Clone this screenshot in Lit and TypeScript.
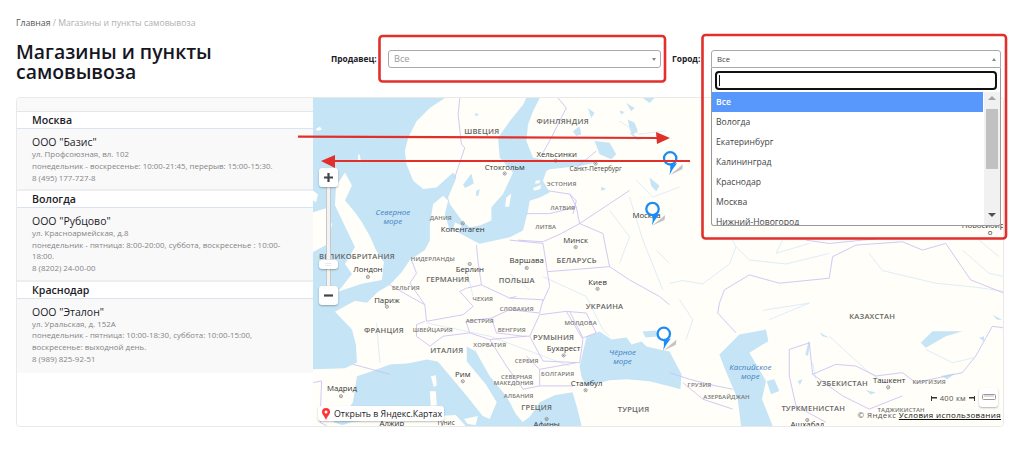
import { LitElement, html, css, svg } from "lit";
import { customElement } from "lit/decorators.js";

type L = [string, number, number];
const big: L[] = [["ШВЕЦИЯ",482,130],["ФИНЛЯНДИЯ",563,120],["БЕЛАРУСЬ",577,260],["ВЕЛИКОБРИТАНИЯ",357,256],["ГЕРМАНИЯ",448,279],["ПОЛЬША",517,280],["УКРАИНА",605,306],["ФРАНЦИЯ",384,330],["РУМЫНИЯ",554,337],["ИТАЛИЯ",447,351],["ГРЕЦИЯ",537,408],["ТУРЦИЯ",634,410],["КАЗАХСТАН",873,316],["УЗБЕКИСТАН",843,384],["ТУРКМЕНИСТАН",814,409]];
const small: L[] = [["ЭСТОНИЯ",562,183],["ЛАТВИЯ",563,207],["ЛИТВА",546,226],["НИДЕРЛАНДЫ",433,259],["ДАНИЯ",441,217],["БЕЛЬГИЯ",406,288],["ЧЕХИЯ",483,299],["СЛОВАКИЯ",517,309],["ШВЕЙЦАРИЯ",433,330],["АВСТРИЯ",480,321],["ВЕНГРИЯ",512,330],["МОЛДОВА",581,323],["ХОРВАТИЯ",490,345],["СЕРБИЯ",527,361],["БОЛГАРИЯ",558,374],["СЕВЕРНАЯ",517,377],["МАКЕДОНИЯ",514,383],["АЛБАНИЯ",519,396],["ГРУЗИЯ",700,385],["АЗЕРБАЙДЖАН",727,397],["КИРГИЗИЯ",930,382],["ТАДЖИКИСТАН",902,410]];
const cities: L[] = [["Хельсинки",557,153],["Стокгольм",505,166],["Копенгаген",463,229],["Минск",576,240],["Берлин",470,269],["Варшава",527,260],["Лондон",368,269],["Париж",387,300],["Киев",598,282],["Москва",647,215],["Бухарест",564,349],["Рим",463,375],["Стамбул",587,384],["Мадрид",342,389],["Алжир",392,424],["Афины",547,425],["Ташкент",890,381],["Ашхабад",808,425],["Новосибирск",988,225],["о",991,232]];
const tiny: L[] = [["Санкт-Петербург",596,168],["Тунис",446,424]];
const seas: L[] = [["Северное",393,212],["море",393,221],["Чёрное",623,353],["море",623,362],["Каспийское",751,368],["море",751,377]];
const dots: [number, number][] = [[556,160],[505,173],[463,223],[576,247],[470,264],[527,268],[368,277],[387,307],[598,289],[564,356],[463,382],[586,391],[341,397],[547,420],[889,388],[808,421],[596,163]];
const pins: [number, number][] = [[670.7,157.7],[653,208.7],[664.3,334.3]];

const offices = [
  { city: "Москва", name: 'ООО "Базис"', lines: ["ул. Профсоюзная, вл. 102", "понедельник - воскресенье: 10:00-21:45, перерыв: 15:00-15:30.", "8 (495) 177-727-8"] },
  { city: "Вологда", name: 'ООО "Рубцово"', lines: ["ул. Красноармейская, д.8", "понедельник - пятница: 8:00-20:00, суббота, воскресенье : 10:00-18:00.", "8 (8202) 24-00-00"] },
  { city: "Краснодар", name: 'ООО "Эталон"', lines: ["ул. Уральская, д. 152А", "понедельник - пятница: 10:00-18:30, суббота: 10:00-15:00, воскресенье: выходной день.", "8 (989) 825-92-51"] },
];
const towns = ["Все", "Вологда", "Екатеринбург", "Калининград", "Краснодар", "Москва", "Нижний-Новогород"];

const mapSvg = () => svg`
<svg class="map-svg" viewBox="313 97 691 330" preserveAspectRatio="none">
  <rect class="land" x="313" y="97" width="691" height="330"/>
  <g transform="translate(400 97) scale(.33333)">
    <path class="water" d="M-261 0 L135 0 L90 30 L50 70 L25 120 L15 160 L20 200 L40 250 L70 275 L110 270 L160 225 L170 240 L145 300 L150 320 L190 375 L210 390 L240 385 L275 370 L275 330 L310 290 L340 225 L300 180 L295 120 L330 70 L370 20 L380 0 L420 0 L400 40 L385 80 L380 130 L400 180 L460 190 L560 185 L590 195 L540 205 L450 215 L440 220 L430 250 L450 285 L420 300 L390 310 L385 340 L370 400 L330 420 L240 440 L220 430 L165 400 L130 410 L105 430 L90 430 L75 459 L30 489 L6 525 L-30 564 L-66 585 L-99 618 L-135 612 L-195 645 L-144 699 L-132 744 L-129 798 L-165 816 L-261 819 Z"/>
    <path class="land" d="M100 320 L130 295 L145 310 L135 350 L150 400 L150 432 L90 432 L90 380 Z"/>
    <path class="land" d="M165 375 L185 385 L175 405 L160 395 Z"/>
    <path class="land" d="M320 300 L335 288 L328 328 L316 328 Z M400 272 L425 262 L422 275 L403 280 Z M408 250 L422 248 L418 258 L406 258 Z"/>
    <path class="water" d="M190 262 L215 228 L222 258 L196 272 Z M230 280 L240 275 L236 295 L228 295 Z M225 45 L238 50 L228 55 Z M500 60 L512 70 L503 75 Z M520 100 L540 85 L545 110 L530 115 Z"/>
  </g>
  <path class="land" d="M345 172 L352 185 L345 200 L355 212 L362 222 L370 236 L376 250 L384 262 L382 280 L362 284 L350 288 L338 292 L352 274 L345 264 L355 247 L345 226 L335 205 L336 186 Z"/>
  <path class="land" d="M313 212 L326 208 L332 224 L328 244 L313 252 Z"/>
  <path class="land" d="M316 128 l4 -2 l2 3 l-5 1 Z M358 154 l2 0 l1 8 l-3 -1 Z M313 190 l5 4 l-2 8 l-3 -2 Z"/>
  <g transform="translate(560 97) scale(.33333)">
    <path class="water" d="M105 130 L150 135 L170 170 L155 185 L120 170 Z M205 65 L225 75 L235 100 L218 112 L210 92 Z M205 100 L245 125 L230 125 Z M250 0 L285 0 L270 15 Z M200 15 L225 30 L215 40 Z M180 38 L195 42 L185 50 Z M85 30 L105 45 L95 60 Z M270 240 L300 265 L290 282 L275 265 Z M125 268 L140 275 L125 280 Z"/>
  </g>
  <path class="water" d="M357 377 L372 372 L390 365 L408 364 L427 360 L438 362 L453 380 L468 398 L483 417 L490 420 L497 403 L486 385 L467 362 L467 347 L476 352 L490 377 L505 395 L510 403 L516 415 L523 423 L530 418 L540 403 L555 396 L573 393 L575 400 L577 407 L582 427 L372 427 L345 427 L333 423 L345 415 L353 403 Z"/>
  <path class="land" d="M431 377 l5 -1 l1 10 l-3 2 Z M430 392 l6 0 l1 14 l-6 1 Z M464 420 l14 -3 l-2 9 l-8 -1 Z"/>
  <path class="land" d="M340 427 L352 423 L400 419 L440 417 L456 416 L466 427 Z"/>
  <path class="water" d="M580 367 L587 337 L600 332 L612 340 L627 338 L632 345 L642 342 L647 347 L660 350 L670 352 L682 375 L681 390 L670 387 L650 382 L627 380 L610 381 L587 387 L582 378 Z"/>
  <path class="water" d="M643 332 L657 331 L658 337 L646 338 Z"/>
  <g transform="translate(670 240) scale(.33333)">
    <path class="water" d="M290 270 L297 305 L240 340 L272 395 L290 425 L278 480 L310 561 L215 561 L205 480 L165 385 L150 345 L210 285 Z"/>
    <path class="water" d="M292 425 L315 420 L330 455 L305 465 Z M408 345 L418 305 L423 310 L416 350 Z M450 278 L480 295 L460 290 Z M755 310 L790 275 L880 275 L830 290 L770 325 Z M930 295 L945 290 L945 305 Z M970 225 L1000 240 L985 240 Z M815 410 L858 402 L835 420 Z M385 425 L400 420 L392 437 Z M590 452 L620 460 L605 466 Z"/>
    <g class="river">
      <path d="M0 130 L40 122 L100 132 L180 72 L200 20 L190 0"/>
      <path d="M200 20 L240 60 L350 72 L480 40"/>
      <path d="M600 40 L640 92 L800 130 L920 142 L1005 155"/>
      <path d="M280 212 L420 190 L300 240"/>
      <path d="M480 290 L600 400 L650 430"/>
      <path d="M770 330 L850 370 L915 355"/>
      <path d="M430 370 L440 420"/>
      <path d="M30 180 L70 240 L50 300"/>
      <path d="M880 30 L960 100 L1005 110"/>
      <path d="M340 0 L320 40 L420 10"/>
      <path d="M930 0 L990 50"/>
    </g>
    <g class="border">
      <path d="M150 190 L165 150 L240 105 L330 130 L480 115 L490 50 L560 15 L700 5 L760 30 L830 10 L905 120 L1005 160"/>
      <path d="M150 190 L145 220 L200 280"/>
      <path d="M360 330 L420 310 L430 405 L500 375 L560 380 L620 410 L700 400 L740 430 L880 400 L920 350 L970 260 L1005 265"/>
      <path d="M360 330 L360 410 L380 500 L470 550"/>
      <path d="M430 405 L520 470 L600 510 L700 470"/>
      <path d="M0 400 L60 420 L140 440 L190 450"/>
      <path d="M40 430 L100 480 L190 510"/>
      <path d="M410 0 L480 10 L630 -5"/>
    </g>
  </g>
  <g transform="translate(310 190) scale(.33333)">
    <g class="river">
      <path d="M470 240 L490 320"/>
      <path d="M700 260 L830 320 L880 420 L900 440"/>
      <path d="M960 20 L1000 150 L1060 300"/>
      <path d="M200 400 L210 520"/>
      <path d="M600 250 L660 300"/>
      <path d="M350 400 L540 440 L780 530"/>
      <path d="M900 60 L960 140 L930 220"/>
      <path d="M1040 180 L1080 220"/>
    </g>
    <g class="border">
      <path d="M240 285 L300 320 L345 345 L350 395"/>
      <path d="M305 210 L320 250 L300 280 L345 345"/>
      <path d="M500 165 L505 215 L515 285 L470 295 L450 305 L490 350 L460 375 L350 395"/>
      <path d="M515 285 L600 325 L620 320 M600 325 L700 330 L690 370"/>
      <path d="M600 150 L700 160 L720 290 L700 335"/>
      <path d="M625 150 L700 155 L755 130 L810 100 L800 50 L780 10"/>
      <path d="M650 70 L720 70 L800 50"/>
      <path d="M715 245 L780 240 L900 230 L880 130 L810 100"/>
      <path d="M900 230 L960 270 L1050 320 L1080 345"/>
      <path d="M770 365 L830 370 L860 430 L820 445 L780 365"/>
      <path d="M690 375 L770 365 L820 450 L810 520 L700 515 L660 440 L690 375"/>
      <path d="M470 395 L545 385 L600 360 L690 370 M545 385 L560 430 L640 440 L660 440"/>
      <path d="M320 405 L320 440 L360 470 L400 440 L480 430 L470 400 M320 405 L345 395"/>
      <path d="M480 430 L540 450 L650 440 M540 450 L590 530 L640 600 M650 500 L690 540 L800 520 M690 540 L690 590 L790 590 M640 600 L690 590"/>
      <path d="M130 525 L240 555 M10 580 L35 575 L30 700 L50 710"/>
      <path d="M810 100 L900 40 L960 0"/>
    </g>
  </g>
  <g transform="translate(400 97) scale(.33333)">
    <g class="border">
      <path d="M180 0 L175 50 L185 140 L195 150 L175 210 L165 240"/>
      <path d="M475 0 L500 30 L455 120 L430 165"/>
      <path d="M445 280 L510 290 L530 310 L520 350"/>
      <path d="M530 210 L590 160"/>
    </g>
  </g>
  <g transform="translate(320 20) scale(.33333)">
    <g class="river"><path d="M900 300 L960 340 L1040 330"/><path d="M950 480 L1000 530 L1080 500"/></g>
  </g>
  ${dots.map(([x, y]) => svg`<circle class="dot" cx=${x} cy=${y} r="1.6"/><circle class="dot-c" cx=${x} cy=${y} r=".6"/>`)}
  ${big.map(([t, x, y]) => svg`<text class="c-big" x=${x} y=${y + 3}>${t}</text>`)}
  ${small.map(([t, x, y]) => svg`<text class="c-small" x=${x} y=${y + 2.5}>${t}</text>`)}
  ${cities.map(([t, x, y]) => svg`<text class="city" x=${x} y=${y + 3}>${t}</text>`)}
  ${tiny.map(([t, x, y]) => svg`<text class="city-tiny" x=${x} y=${y + 2.5}>${t}</text>`)}
  ${seas.map(([t, x, y]) => svg`<text class="sea" x=${x} y=${y + 3}>${t}</text>`)}
  ${pins.map(([x, y]) => svg`
    <path class="pin-shadow" d="M${x} ${y + 16.7} L${x + 12.7} ${y + 6} L${x + 12} ${y + 11} Z"/>
    <path class="pin-tail" d="M${x + 7} ${y + 4.7} Q${x + 2} ${y + 11} ${x - 0.7} ${y + 16.7} Q${x + 0.6} ${y + 12} ${x} ${y + 7} Z"/>
    <circle class="pin" cx=${x} cy=${y} r="6.2"/>`)}
</svg>`;

@customElement("app-root")
export class AppRoot extends LitElement {
  static styles = css`
    :host { display: block; position: relative; width: 1024px; height: 450px; overflow: hidden; background: #fff; font-family: "Open Sans", sans-serif; color: #1c1c28; }
    .page { display: flex; flex-direction: column; padding: 17px 20px 0 16px; }
    .crumbs { font-size: 8.7px; line-height: 12px; color: #b0b0b0; }
    .crumbs b { font-weight: 400; color: #555; }
    .head { display: flex; align-items: flex-start; height: 44px; margin-top: 9px; }
    h1 { margin: 4px 0 0; width: 315px; flex: none; font-size: 19.4px; line-height: 20px; font-weight: 600; color: #16161f; }
    .label { width: 46px; flex: none; font-size: 8.4px; font-weight: 700; line-height: 18px; margin-top: 12px; color: #1c1c28; white-space: nowrap; }
    .label.short { width: 28px; }
    .sel { position: relative; height: 18px; margin-top: 12px; box-sizing: border-box; border: 1px solid #aaa; border-radius: 3px; background: #fff; font-size: 9.2px; line-height: 16px; padding-left: 5px; color: #444; }
    .sel.seller { width: 273px; margin-left: 11px; margin-right: 11px; color: #999; }
    .sel.city { width: 290px; margin-left: 11px; border-radius: 3px 3px 0 0; }
    .caret { position: absolute; right: 4px; top: 7px; width: 0; height: 0; border: 2.5px solid transparent; border-top: 3px solid #888; border-bottom: 0; }
    .caret.up { border-top: 0; border-bottom: 3px solid #888; }
    .drop { position: absolute; z-index: 5; left: -1px; top: 17px; width: 290px; height: 158px; box-sizing: border-box; border: 1px solid #999; border-top: 0; border-radius: 0 0 3px 3px; background: #fff; overflow: hidden; color: #444; }
    .search { height: 24px; box-sizing: border-box; padding: 3px 3px 2px 3px; }
    .search div { position: relative; height: 19px; box-sizing: border-box; border: 2px solid #111; border-radius: 4px; background: #fff; }
    .search i { position: absolute; left: 2px; top: 2px; width: 1px; height: 11px; background: #111; }
    .drop-body { display: flex; height: 134px; }
    .opts { flex: 1; min-width: 0; overflow: hidden; }
    .opt { height: 20px; line-height: 20px; padding-left: 4px; font-size: 8.6px; white-space: nowrap; }
    .opt.on { background: #5897fb; color: #fff; font-weight: 600; }
    .bar { position: relative; width: 16px; flex: none; margin-left: 1px; background: #f1f1f1; }
    .thumb { position: absolute; left: 2px; top: 17px; width: 12px; height: 60px; background: #c1c1c1; }
    .ar { position: absolute; left: 4px; width: 0; height: 0; border: 4px solid transparent; }
    .ar.u { top: 4px; border-top: 0; border-bottom: 4px solid #a3a3a3; }
    .ar.d { bottom: 9px; border-bottom: 0; border-top: 4px solid #505050; }

    .panel { display: flex; height: 330px; margin-top: 15px; box-sizing: border-box; border: 1px solid #e9e9e9; border-radius: 4px; overflow: hidden; }
    .side { width: 296px; flex: none; display: flex; flex-direction: column; }
    .side-top { height: 13px; background: #f9f9fa; border-bottom: 1px solid #e2e7ee; flex: none; }
    .city-row { height: 16px; line-height: 16px; padding-left: 15px; font-size: 10.6px; font-weight: 600; color: #1c1c28; background: #fff; border-bottom: 1px solid #dbe3ef; flex: none; }
    .card { padding: 5px 24px 4.5px 15px; background: #f9f9fa; border-bottom: 2px solid #eceef2; flex: none; }
    .card:last-child { border-bottom: 0; padding-bottom: 7.5px; }
    .name { font-size: 10.5px; line-height: 16px; color: #1c1c28; margin-bottom: -1px; }
    .ln { font-size: 7.9px; line-height: 11.8px; color: #858585; }
    .map { position: relative; flex: 1; min-width: 0; }
    .map-svg { position: absolute; inset: 0; width: 100%; height: 100%; display: block; }
    .land { fill: #fffef8; }
    .water { fill: #c5e4f6; }
    .river path { fill: none; stroke: #d6e9f9; stroke-width: 2.4; }
    .border path { fill: none; stroke: #cbc0f5; stroke-width: 2.6; }
    text { text-anchor: middle; font-family: "Open Sans", sans-serif; }
    .c-big { font-size: 7.6px; fill: #666; font-weight: 600; letter-spacing: .2px; }
    .c-small { font-size: 6px; fill: #777; font-weight: 600; letter-spacing: .1px; }
    .city { font-size: 7.8px; fill: #333; }
    .city-tiny { font-size: 6.4px; fill: #444; }
    .sea { font-size: 8px; fill: #3f7fc4; font-style: italic; }
    .dot { fill: none; stroke: #777; stroke-width: .7; }
    .dot-c { fill: #777; }
    .pin { fill: none; stroke: #1a8cf5; stroke-width: 2.3; }
    .pin-tail { fill: #1a8cf5; }
    .pin-shadow { fill: #a9a9a9; opacity: .7; }
    .ctl { position: absolute; left: 6px; width: 19px; box-sizing: border-box; background: #fff; border-radius: 3px; box-shadow: 0 1px 2px rgba(0,0,0,.3); display: flex; align-items: center; justify-content: center; }
    .plus { top: 70px; height: 19px; }
    .minus { top: 188px; height: 19px; }
    .track { position: absolute; left: 13px; top: 89px; width: 5px; height: 99px; box-sizing: border-box; background: #f3f3f3; border-left: 1px solid #c8c8c8; border-right: 1px solid #c8c8c8; }
    .handle { top: 162px; height: 9px; color: #aaa; font-size: 5px; line-height: 9px; letter-spacing: .3px; }
    .ctl svg { display: block; }
    .open { position: absolute; left: 5px; bottom: 5px; height: 15px; width: 126px; box-sizing: border-box; background: #fff; border-radius: 3px; box-shadow: 0 1px 2px rgba(0,0,0,.25); display: flex; align-items: center; gap: 4px; padding-left: 4px; font-size: 8.8px; color: #222; white-space: nowrap; }
    .scale { position: absolute; right: 28px; bottom: 23px; display: flex; align-items: center; gap: 3px; font-size: 7.6px; color: #555; letter-spacing: .3px; }
    .scale i { display: block; box-sizing: border-box; height: 5px; width: 6px; border-left: 1.5px solid #333; background: linear-gradient(#333, #333) center / 100% 1.5px no-repeat; }
    .scale i.r { border-left: 0; border-right: 1.5px solid #333; }
    .ruler { position: absolute; right: 5px; bottom: 19px; width: 19px; height: 19px; background: #fff; border-radius: 3px; box-shadow: 0 1px 2px rgba(0,0,0,.3); display: flex; align-items: center; justify-content: center; }
    .copy { position: absolute; right: 2px; bottom: 6px; font-size: 8px; color: #555; white-space: nowrap; letter-spacing: .36px; }
    .copy u { color: #111; }
    .marks { position: absolute; inset: 0; width: 1024px; height: 450px; z-index: 10; pointer-events: none; }
    .box { fill: none; stroke: #e1302c; stroke-width: 2.6; }
    .arrow { stroke: #e1302c; stroke-width: 2.2; fill: none; }
    .head-a { fill: #e1302c; }
  `;

  render() {
    return html`
      <div class="page">
        <div class="crumbs"><b>Главная</b> / Магазины и пункты самовывоза</div>
        <div class="head">
          <h1>Магазины и пункты самовывоза</h1>
          <div class="label">Продавец:</div>
          <div class="sel seller">Все<span class="caret"></span></div>
          <div class="label short">Город:</div>
          <div class="sel city">Все<span class="caret up"></span>
            <div class="drop">
              <div class="search"><div><i></i></div></div>
              <div class="drop-body">
                <div class="opts">
                  ${towns.map((t, i) => html`<div class="opt ${i === 0 ? "on" : ""}">${t}</div>`)}
                </div>
                <div class="bar"><span class="ar u"></span><div class="thumb"></div><span class="ar d"></span></div>
              </div>
            </div>
          </div>
        </div>
        <div class="panel">
          <div class="side">
            <div class="side-top"></div>
            ${offices.map((o) => html`
              <div class="city-row">${o.city}</div>
              <div class="card">
                <div class="name">${o.name}</div>
                ${o.lines.map((l) => html`<div class="ln">${l}</div>`)}
              </div>`)}
          </div>
          <div class="map">
            ${mapSvg()}
            <div class="track"></div>
            <div class="ctl plus"><svg width="11" height="11" viewBox="0 0 11 11"><path d="M5.5 1v9M1 5.5h9" stroke="#444" stroke-width="2.2"/></svg></div>
            <div class="ctl handle">::::</div>
            <div class="ctl minus"><svg width="11" height="11" viewBox="0 0 11 11"><path d="M1 5.5h9" stroke="#444" stroke-width="2.2"/></svg></div>
            <div class="open">
              <svg width="8" height="12" viewBox="0 0 8 12"><path d="M4 0a4 4 0 0 1 4 4c0 2.5-2.5 4-4 8C2.500 8 0 6.500 0 4a4 4 0 0 1 4-4z" fill="#f33"/><circle cx="4" cy="4" r="1.500" fill="#fff"/></svg>
              Открыть в Яндекс.Картах
            </div>
            <div class="scale"><i></i>400 км<i class="r"></i></div>
            <div class="ruler"><svg width="14" height="7" viewBox="0 0 14 7"><rect x=".5" y=".5" width="13" height="5" rx="1" fill="none" stroke="#999"/><path d="M3 1v2M5 1v2M7 1v2M9 1v2M11 1v2" stroke="#999" stroke-width=".7"/></svg></div>
            <div class="copy">© Яндекс <u>Условия использования</u></div>
          </div>
        </div>
      </div>
      <svg class="marks" viewBox="0 0 1024 450">
        <rect class="box" x="379.500" y="36" width="285.500" height="45.500" rx="3"/>
        <rect class="box" x="702.500" y="35" width="303.500" height="203.500" rx="3"/>
        <path class="arrow" d="M298 136.700 L660 138"/>
        <path class="head-a" d="M670 138 L656 132 L657 144 Z"/>
        <path class="arrow" d="M690 161 L332 161"/>
        <path class="head-a" d="M321 161 L335 155 L335 168 Z"/>
      </svg>
    `;
  }
}
